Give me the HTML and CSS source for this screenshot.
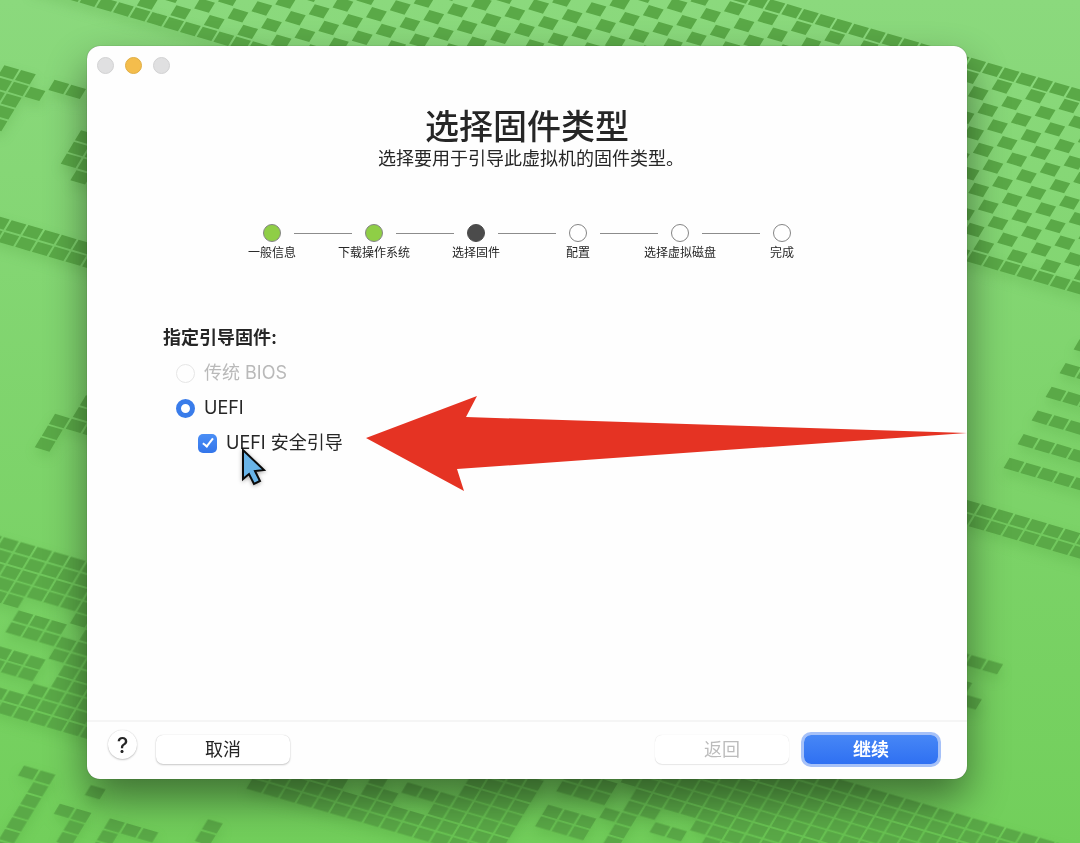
FILE: index.html
```html
<!DOCTYPE html>
<html lang="zh-CN">

<head>
  <meta charset="UTF-8">
  <meta name="viewport" content="width=device-width, initial-scale=1">
  <title>选择固件类型</title>
  <link rel="stylesheet" href="styles.css">
</head>

<body>
  <!-- wallpaper: every line is a row of tiles, one unit per tile -->
  <svg class="wallpaper" viewBox="0 0 1080 843" preserveAspectRatio="xMidYMid slice" aria-hidden="true">
    <defs>
      <linearGradient id="sky" x1="0" y1="0" x2="0" y2="1">
        <stop offset="0" stop-color="#8bd97d"></stop>
        <stop offset="1" stop-color="#72cf5b"></stop>
      </linearGradient>
    </defs>
    <rect width="1080" height="843" fill="url(#sky)"></rect>
    <g class="tiles shaded">
      <path transform="matrix(16.73 4.88 -7.1 11.72 969.3 256.2)" d="M-56 0h70"></path>
      <path transform="matrix(16.73 4.88 -7.1 11.72 1.3 70.2)" d="M0 0h2M3 0h2M-1 1h4M-1 2h3M-1 3h3M-1 4h3"></path>
      <path transform="matrix(16.73 4.88 -7.1 11.72 70.9 146.9)" d="M0 -1h3M0 0h3M0 1h3M1 2h2"></path>
      <path transform="matrix(16.73 4.9 -7.1 11.72 8.6 225.2)" d="M-3 0h70M-3 1h70"></path>
      <path transform="matrix(16.73 4.88 -7.1 11.72 44.9 430.6)" d="M1 -3h3M1 -2h3M0 -1h3M0 0h1M0 1h1"></path>
      <path transform="matrix(16.73 4.88 -7 11.85 1006.6 462.9)" d="M0 0h8M0 -2h8M0 -4h8M0 -6h8M0 -8h8M0 -10h8"></path>
      <path transform="matrix(16.73 4.88 -7.1 11.72 0.9 542.2)" d="M-1 0h10M-1 1h10M-1 2h10M-1 3h10M-1 4h4M6 4h3M3 5h3M7 5h3M3 6h6M6 7h4M2 8h4M7 8h3M3 9h3M7 9h3M6 10h5M3 11h8M3 12h8"></path>
      <path transform="matrix(16.73 4.88 -7.1 11.72 20.9 770.6)" d="M0 0h2M4 0h1M11 0h1M1 1h1M11 1h1M1 2h1M3 2h2M6 2h3M1 3h1M4 3h1M6 3h1M1 4h1M4 4h1M6 4h1M1 5h1M1 6h1"></path>
      <path transform="matrix(16.73 4.88 -7.1 11.72 249.3 783.6)" d="M0 0h15M0 -1h15M0 -2h5M6 -2h2M10 -2h5M6 -3h1M8 -3h7M11 -4h4M11 -5h4M11 -6h4"></path>
      <path transform="matrix(16.73 4.88 -7.1 11.72 559.3 786.2)" d="M3 -6h40M3 -5h40M3 -4h40M3 -3h40M3 -2h40M0 -1h3M4 -1h40M0 0h3M4 0h2M8 0h30M3 1h2M6 1h2M9 1h30M0 2h3M4 2h1M11 2h20M0 3h3M4 3h1M12 3h20"></path>
      <path transform="matrix(16.73 4.88 -7.1 11.72 968.6 660.2)" d="M-1 0h3M-1 2h2M0 3h2"></path>
    </g>
    <g class="tiles">
      <path transform="matrix(16.73 4.88 -7.1 11.72 969.3 256.2)" d="M-56 -14h70"></path>
      <path class="checker" transform="matrix(16.73 4.88 -7.1 11.72 969.3 256.2)" d="M-58 -1h70M-57 -2h70M-58 -3h70M-57 -4h70M-58 -5h70M-57 -6h70M-58 -7h70M-57 -8h70M-58 -9h70M-57 -10h70M-58 -11h70M-57 -12h70M-58 -13h70"></path>
    </g>
  </svg>

  <main class="window">
    <div class="titlebar">
      <button class="light" type="button" aria-label="关闭"></button>
      <button class="light minimize" type="button" aria-label="最小化"></button>
      <button class="light" type="button" aria-label="缩放"></button>
    </div>

    <header class="header">
      <h1>选择固件类型</h1>
      <p>选择要用于引导此虚拟机的固件类型。</p>
    </header>

    <ol class="steps">
      <li class="done"><span class="dot"></span><span class="label">一般信息</span></li>
      <li class="done"><span class="dot"></span><span class="label">下载操作系统</span></li>
      <li class="current"><span class="dot"></span><span class="label">选择固件</span></li>
      <li><span class="dot"></span><span class="label">配置</span></li>
      <li><span class="dot"></span><span class="label">选择虚拟磁盘</span></li>
      <li><span class="dot"></span><span class="label">完成</span></li>
    </ol>

    <form class="firmware" id="firmware">
      <h2>指定引导固件:</h2>
      <label class="option disabled"><input type="radio" name="firmware" disabled>传统 BIOS</label>
      <label class="option"><input type="radio" name="firmware" checked>UEFI</label>
      <label class="option nested"><input type="checkbox" checked>UEFI 安全引导</label>
    </form>

    <footer class="footer">
      <button class="help" type="button">?</button>
      <div class="actions">
        <button class="btn" type="button">取消</button>
        <button class="btn back" type="button" disabled>返回</button>
        <button class="btn primary" type="submit" form="firmware">继续</button>
      </div>
    </footer>

    <svg class="pointer" width="880" height="460" viewBox="0 0 880 460" aria-hidden="true">
      <path class="arrow" d="M279 392L390 350L379 371L880 387L370 423L377 445Z"></path>
      <path class="cursor" d="M156 404V433L162 428L167 438L173 435L168 425L177 424Z"></path>
    </svg>
  </main>
</body>

</html>
```
FILE: styles.css
```css
* {
  box-sizing: border-box;
}

body {
  margin: 0;
  min-height: 100vh;
  padding: 46px 113px 64px 87px;
  display: flex;
  background: #7dd36a;
  color: #262626;
  font-family: Inter, "Noto Sans CJK SC", sans-serif;
  font-size: 18px;
  line-height: 24px;
}

button {
  font: inherit;
  color: inherit;
  border: 0;
  padding: 0;
}

.wallpaper {
  position: fixed;
  top: 0;
  left: 0;
  width: 100%;
  height: 100%;
  z-index: -1;
}

.tiles {
  fill: none;
  stroke: #5aa947;
  stroke-width: .86;
  stroke-dasharray: .88 .12;
}

.shaded {
  filter: drop-shadow(0 6px 6px rgba(60, 140, 40, .2));
}

.checker {
  stroke-dasharray: .88 1.12;
}

.window {
  position: relative;
  flex: 1;
  display: flex;
  flex-direction: column;
  background: #fefefe;
  border-radius: 13px;
  box-shadow: 0 0 1px rgba(0, 0, 0, .5), 0 20px 40px rgba(0, 0, 0, .45);
}

.titlebar {
  display: flex;
  gap: 11px;
  padding: 11px 10px 10px;
}

.light {
  width: 17px;
  height: 17px;
  border: 1px solid #d2d2d3;
  border-radius: 50%;
  background: #e0e0e1;
}

.light.minimize {
  border-color: #e0ae45;
  background: #f4bd4c;
}

.header {
  padding-top: 23px;
  text-align: center;
}

h1 {
  margin: 0;
  font-size: 34px;
  font-weight: 500;
  line-height: 40px;
}

/* balances the blank half of the closing full stop */
.header p {
  margin: 0;
  padding-left: 8px;
}

.steps {
  width: 100%;
  max-width: 612px;
  margin: 53px auto 0;
  padding: 0;
  display: grid;
  grid-template-columns: repeat(6, 1fr);
  list-style: none;
  font-size: 12px;
  line-height: 22px;
}

.steps li {
  display: grid;
  grid-template-columns: 1fr 18px 1fr;
  column-gap: 13px;
  align-items: center;
}

/* each step draws half of the line to its neighbours */
.steps li::before,
.steps li::after {
  content: "";
  grid-row: 1;
  height: 1px;
  background: #8c8c8c;
}

.steps li::before {
  grid-column: 1;
}

.steps li::after {
  grid-column: 3;
}

.steps li:first-child::before,
.steps li:last-child::after {
  visibility: hidden;
}

.dot {
  grid-row: 1;
  grid-column: 2;
  height: 18px;
  border: 1px solid #858585;
  border-radius: 50%;
  background: #fff;
}

.done .dot {
  background: #8fce46;
}

.current .dot {
  background: #4b4b4b;
  border-color: #4b4b4b;
}

.label {
  grid-row: 2;
  grid-column: 1 / -1;
  text-align: center;
  white-space: nowrap;
}

.firmware {
  margin-top: 62px;
  padding: 0 76px;
  flex: 1;
  display: flex;
  flex-direction: column;
  align-items: flex-start;
  gap: 11px;
}

h2 {
  margin: 0;
  font-size: 18px;
  font-weight: 700;
  line-height: 24px;
}

.option {
  display: flex;
  align-items: center;
  gap: 9px;
  padding-left: 13px;
}

.option.nested {
  padding-left: 35px;
}

.option.disabled {
  color: #b9b9b9;
}

.option input {
  appearance: none;
  width: 19px;
  height: 19px;
  margin: 0;
  display: grid;
  place-items: center;
}

.option input[type="radio"] {
  border: 1px solid #e6e6e6;
  border-radius: 50%;
}

.option input[type="radio"]:checked {
  border: 5px solid #397cea;
  background: #fff;
}

.option input[type="checkbox"] {
  border-radius: 5px;
  background: linear-gradient(#4a8ef5, #3375ea);
}

.option input[type="checkbox"]::after {
  content: "";
  width: 4px;
  height: 9px;
  margin-bottom: 3px;
  border: solid #fff;
  border-width: 0 2px 2px 0;
  transform: rotate(38deg);
}

.footer {
  display: flex;
  align-items: flex-start;
  gap: 19px;
  padding: 8px 29px 15px 21px;
  border-top: 2px solid #f5f5f5;
}

.help {
  width: 29px;
  height: 29px;
  border-radius: 50%;
  background: #fff;
  box-shadow: 0 0 1px rgba(0, 0, 0, .2), 0 1px 2px rgba(0, 0, 0, .2);
  font-size: 22px;
  font-weight: 500;
}

.actions {
  flex: 1;
  display: flex;
  gap: 15px;
  padding-top: 5px;
}

.btn {
  width: 134px;
  height: 29px;
  border-radius: 7px;
  background: #fff;
  box-shadow: 0 0 1px rgba(0, 0, 0, .2), 0 1px 2px rgba(0, 0, 0, .2);
}

.back {
  margin-left: auto;
  color: #bcbcbc;
  box-shadow: 0 0 1px rgba(0, 0, 0, .15), 0 1px 1px rgba(0, 0, 0, .08);
}

.primary {
  background: linear-gradient(#4787f6, #2f70f2);
  box-shadow: 0 0 0 3px #a6c1f8;
  color: #fff;
  font-weight: 700;
}

.pointer {
  position: absolute;
  top: 0;
  left: 0;
  pointer-events: none;
}

.arrow {
  fill: #e53323;
}

.cursor {
  fill: #69b4e8;
  stroke: #0a0a0a;
  stroke-width: 2;
  filter: drop-shadow(0 1px 2px rgba(0, 0, 0, .35));
}
```
